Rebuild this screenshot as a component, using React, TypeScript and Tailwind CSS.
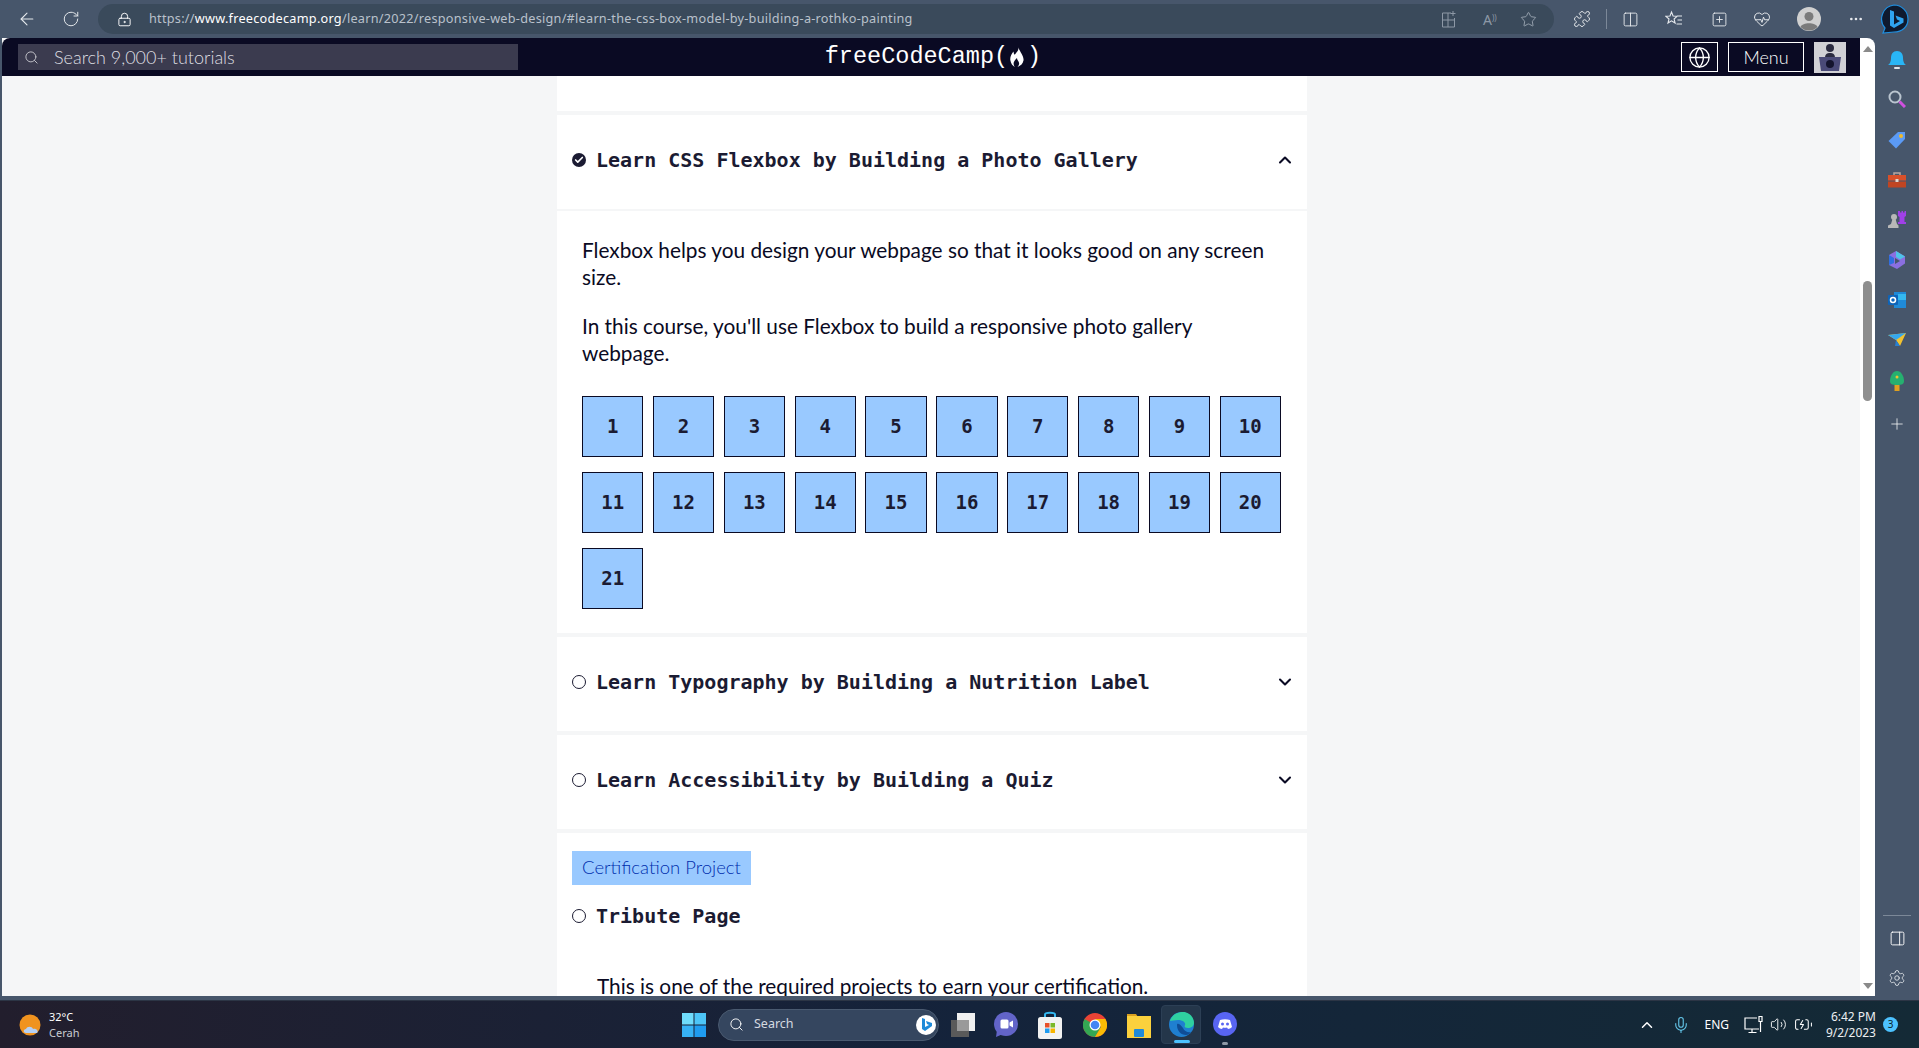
import {
  ArrowLeft,
  RotateCw,
  LockKeyhole,
  Search,
  Globe,
  Check,
  ChevronUp,
  ChevronDown,
  Star,
  Puzzle,
  Columns2,
  SquarePlus,
  HeartPulse,
  Ellipsis,
  Plus,
  PanelRight,
  Settings,
  Mic,
  Volume2,
  BatteryCharging,
} from "lucide-react";

// ─── Browser chrome ───────────────────────────────────────────────────────────
function BingLogo({ size = 30 }: { size?: number }) {
  return (
    <svg width={size} height={size} viewBox="0 0 30 30">
      <path d="M15 1a14 14 0 0 1 14 14c0 8-6 13-14 13l-11 1 2-5A14 14 0 0 1 15 1z" fill="#0f1a2e" stroke="#1f8fe0" strokeWidth="1.2" />
      <path d="M11 6l4 1.500v13l6-3.500-3-1.500-1.500-4 8 3v4l-9.500 5.500-4-2.500z" fill="#2fa4f0" />
    </svg>
  );
}

function AddressBar() {
  return (
    <div className="flex h-[30px] w-[1456px] items-center rounded-full bg-[#3a4a5b] pl-[19px] text-[#c5ccd5]">
      <LockKeyhole size={15} strokeWidth={1.5} className="text-white" />
      <span className="ml-[17px] w-[1292px] font-['Noto_Sans',sans-serif] text-[12.7px] tracking-[0.02em] text-[#b9c1cb]">
        https://<span className="text-white">www.freecodecamp.org</span>/learn/2022/responsive-web-design/#learn-the-css-box-model-by-building-a-rothko-painting
      </span>
      <svg width="16" height="17" viewBox="0 0 16 17" fill="none" stroke="#8d98a6" strokeWidth="1">
        <path d="M10 2H1.500v14h12V7M1.500 9h12M7 2v14M12 0v5M9.500 2.500h5" />
      </svg>
      <span className="ml-[26px] font-['Noto_Sans',sans-serif] text-[14px] text-[#8d98a6]">A<sup className="text-[8px]">))</sup></span>
      <Star size={17} strokeWidth={1.2} className="ml-[23px] text-[#a3adb9]" />
    </div>
  );
}

function TopBar() {
  return (
    <div className="flex h-[38px] shrink-0 items-center bg-[#47566b] text-[#e6e9ed]">
      <div className="flex w-[98px] shrink-0 items-center pl-[17px]">
        <ArrowLeft size={20} strokeWidth={1.3} />
        <RotateCw size={18} strokeWidth={1.3} className="ml-[25px]" />
      </div>
      <AddressBar />
      <div className="ml-[19px] flex items-center">
        <Puzzle size={18} strokeWidth={1.3} />
        <div className="ml-[15px] h-[20px] w-px bg-[#7c8898]" />
        <Columns2 size={17} strokeWidth={1.3} className="ml-[15px]" />
        <svg width="18" height="18" viewBox="0 0 18 18" fill="none" stroke="currentColor" strokeWidth="1.1" className="ml-[26px]">
          <path d="M6.500 2l1.600 4 4 .3-3 2.700 1 4-3.600-2.200L3 13l1-4-3-2.700 4-.3zM12 6h5M12.500 10H17M11.500 14H17" />
        </svg>
        <SquarePlus size={17} strokeWidth={1.3} className="ml-[28px]" />
        <HeartPulse size={18} strokeWidth={1.3} className="ml-[25px]" />
        <svg width="24" height="24" viewBox="0 0 24 24" className="ml-[26px]">
          <circle cx="12" cy="12" r="12" fill="#d0d0d0" />
          <circle cx="12" cy="9.500" r="4.500" fill="#7b7b7b" />
          <path d="M3.500 20c2-5 15-5 17 0a12 12 0 0 1-17 0z" fill="#7b7b7b" />
        </svg>
        <Ellipsis size={16} strokeWidth={2} className="ml-[27px]" />
        <div className="ml-[15px]">
          <BingLogo />
        </div>
      </div>
    </div>
  );
}

// ─── freeCodeCamp nav ─────────────────────────────────────────────────────────
function Flame() {
  return (
    <svg width="17" height="22" viewBox="0 0 15 20" className="mx-[1px]">
      <path d="M8 1c1 3-1 4-3 7-1-1-1-2-1-3-2 2-3.500 5-3 8 .5 3 2 5 4 6-2-3-1-5 2-8 0 2 2 3 2 5 0 1-.5 2-1.500 3 3-1 5-3 5.500-6 .3-4-3-7-5-12z" fill="#fff" />
    </svg>
  );
}

function Avatar() {
  return (
    <div className="ml-[10px] flex h-[31px] w-[32px] items-center justify-center bg-[#d0d0d5]">
      <svg width="26" height="29" viewBox="0 0 26 29">
        <circle cx="13" cy="5" r="4" fill="#2a2a40" />
        <path d="M8 15c0-4 2-5 5-5s5 1 5 5z" fill="#2a2a40" />
        <path d="M2 14h22l-2 14H4z" fill="#4a4a78" />
        <circle cx="13" cy="21" r="4" fill="#14142e" />
      </svg>
    </div>
  );
}

function Nav() {
  return (
    <div className="grid h-[38px] shrink-0 grid-cols-[1fr_auto_1fr] items-center rounded-tl-lg bg-[#0a0a23] text-white">
      <div className="pl-4">
        <div className="flex h-[26px] w-[500px] items-center bg-[#3b3b4f] pl-[6px] font-['Lato',sans-serif] text-[18px] font-light text-[#dfdfe2]">
          <Search size={15} strokeWidth={1.5} className="text-[#c5c5cc]" />
          <span className="ml-[15px]">Search 9,000+ tutorials</span>
        </div>
      </div>
      <div className="flex items-center pl-[4px] font-['Liberation_Mono',monospace] text-[23.5px]">
        <span>freeCodeCamp(</span>
        <Flame />
        <span>)</span>
      </div>
      <div className="flex items-center justify-end pr-[14px]">
        <div className="flex h-[30px] w-[37px] items-center justify-center border border-white">
          <Globe size={23} strokeWidth={1.4} />
        </div>
        <div className="ml-[10px] flex h-[30px] w-[76px] items-center justify-center border border-white font-['Lato',sans-serif] text-[18px] font-light">
          Menu
        </div>
        <Avatar />
      </div>
    </div>
  );
}

// ─── Curriculum blocks ────────────────────────────────────────────────────────
function StatusIcon({ done }: { done?: boolean }) {
  if (done) {
    return (
      <span className="flex h-[14px] w-[14px] shrink-0 items-center justify-center rounded-full bg-[#1b1b32]">
        <Check size={10} strokeWidth={4} className="text-white" />
      </span>
    );
  }
  return <span className="h-[14px] w-[14px] shrink-0 rounded-full border border-[#1b1b32]" />;
}

function BlockTitle({ done, title }: { done?: boolean; title: string }) {
  return (
    <div className="flex items-center">
      <StatusIcon done={done} />
      <span className="ml-[10px] font-['DejaVu_Sans_Mono',monospace] text-[20px] leading-[30px] font-bold whitespace-nowrap text-[#1b1b32]">
        {title}
      </span>
    </div>
  );
}

function BlockHeader({ done, open, title }: { done?: boolean; open?: boolean; title: string }) {
  return (
    <div className="flex h-[94px] items-center justify-between bg-white pr-[12px] pb-[4px] pl-[15px]">
      <BlockTitle done={done} title={title} />
      {open ? (
        <ChevronUp size={20} strokeWidth={2.5} className="text-[#0a0a23]" />
      ) : (
        <ChevronDown size={20} strokeWidth={2.5} className="text-[#0a0a23]" />
      )}
    </div>
  );
}

const steps = Array.from({ length: 21 }, (_, i) => i + 1);

function Curriculum() {
  return (
    <div className="ml-[555px] flex min-h-full w-[750px] flex-col gap-1">
      <div className="h-[35px] bg-white" />
      <div className="flex flex-col gap-[2px]">
        <BlockHeader done open title="Learn CSS Flexbox by Building a Photo Gallery" />
        <div className="bg-white pt-[25px] pr-[26px] pb-[24px] pl-[25px] font-['Lato',sans-serif] text-[20.8px] leading-[27px] text-[#0a0a23]">
          <p className="mb-[22px] max-w-[690px]">Flexbox helps you design your webpage so that it looks good on any screen size.</p>
          <p className="mb-[30px] max-w-[690px]">In this course, you'll use Flexbox to build a responsive photo gallery webpage.</p>
          <div className="grid grid-cols-10 gap-x-[9.500px] gap-y-[15px]">
            {steps.map((n) => (
              <div
                key={n}
                className="flex h-[61px] items-center justify-center border border-[#0a0a23] bg-[#99c9ff] font-['DejaVu_Sans_Mono',monospace] text-[19px] font-bold text-[#1b1b32]"
              >
                {n}
              </div>
            ))}
          </div>
        </div>
      </div>
      <BlockHeader title="Learn Typography by Building a Nutrition Label" />
      <BlockHeader title="Learn Accessibility by Building a Quiz" />
      <div className="flex-1 bg-white px-[15px] pt-[18px]">
        <div className="flex h-[34px] w-[179px] items-center justify-center bg-[#99c9ff] font-['Lato',sans-serif] text-[18.5px] font-light text-[#002ead]">
          Certification Project
        </div>
        <div className="mt-[16px]">
          <BlockTitle title="Tribute Page" />
        </div>
        <p className="mt-[41px] ml-[25px] font-['Lato',sans-serif] text-[20.8px] leading-[27px] whitespace-nowrap text-[#0a0a23]">
          This is one of the required projects to earn your certification.
        </p>
      </div>
    </div>
  );
}

function PageScrollbar() {
  return (
    <div className="flex w-[15px] shrink-0 flex-col items-center rounded-tr-lg bg-white">
      <div className="mt-[8px] h-0 w-0 border-x-[5px] border-b-[6px] border-x-transparent border-b-[#8a8a8a]" />
      <div className="mt-[229px] h-[120px] w-[9px] rounded-full bg-[#8f8f8f]" />
      <div className="flex-1" />
      <div className="mb-[7px] h-0 w-0 border-x-[5px] border-t-[6px] border-x-transparent border-t-[#8a8a8a]" />
    </div>
  );
}

// ─── Edge sidebar ─────────────────────────────────────────────────────────────
function Sidebar() {
  return (
    <div className="flex w-[44px] shrink-0 flex-col items-center bg-[#47566b] pt-[13px]">
      <svg width="18" height="20" viewBox="0 0 18 20">
        <path d="M9 0c4 0 6 3 6 7 0 3 1 6 3 7H0c2-1 3-4 3-7 0-4 2-7 6-7z" fill="#29b6f6" />
        <rect x="6" y="16" width="6" height="2" rx="1" fill="#dfe6ec" />
      </svg>
      <svg width="18" height="18" viewBox="0 0 18 18" className="mt-[19px]">
        <circle cx="7" cy="7" r="5.500" fill="none" stroke="#b9c4cf" strokeWidth="2" />
        <path d="M11.500 11.500L17 17" stroke="#d050e0" strokeWidth="3" />
      </svg>
      <svg width="18" height="18" viewBox="0 0 18 18" className="mt-[23px]">
        <path d="M10 1h7v7l-9 9.500L.5 10z" fill="#5b9af5" />
        <circle cx="13" cy="5" r="2" fill="#f0b92a" />
      </svg>
      <svg width="18" height="16" viewBox="0 0 18 16" className="mt-[23px]">
        <path d="M6 3V1h6v2" fill="none" stroke="#b9a6a0" strokeWidth="1.500" />
        <rect y="3" width="18" height="5.500" fill="#d8502a" />
        <rect y="9.500" width="18" height="6" fill="#c04522" />
        <rect x="7.500" y="7" width="3" height="3" fill="#e0d8d0" />
      </svg>
      <svg width="18" height="18" viewBox="0 0 18 18" className="mt-[22px]">
        <path d="M10 1h2v1.500h1.500V1h1.500v1.500h1.500V1H18v5l-1.500 1v5H18v2h-8v-2h1.500V7L10 6z" fill="#a040e8" />
        <circle cx="6" cy="7" r="3" fill="#b8b8b8" />
        <path d="M4.500 9h3l1.500 5 1.500 1.500V18H0v-2.500L3 14z" fill="#b8b8b8" />
      </svg>
      <svg width="18" height="18" viewBox="0 0 18 18" className="mt-[23px]">
        <path d="M8 0l9 5.500v7L9 18 1 14V4z" fill="#8a6fe0" />
        <path d="M8 0l9 5.500-5 3L8 6z" fill="#4fc3e8" />
        <path d="M1 4l5 3v5l-5 2z" fill="#2f6fe0" />
        <path d="M7 7l5 3-5 3z" fill="#47566b" />
      </svg>
      <svg width="18" height="16" viewBox="0 0 18 16" className="mt-[23px]">
        <rect x="6" width="12" height="16" fill="#1f8ad8" />
        <rect x="10" y="2" width="8" height="6" fill="#35b8f0" />
        <rect y="3" width="10" height="10" rx="1" fill="#0f64b8" />
        <circle cx="5" cy="8" r="2.500" fill="none" stroke="#fff" strokeWidth="1.500" />
      </svg>
      <svg width="18" height="13" viewBox="0 0 18 13" className="mt-[25px]">
        <path d="M0 2l18-2-6 13-4-6z" fill="#f2c230" />
        <path d="M0 2l8 5 10-7z" fill="#35a8ee" />
        <path d="M8 7l-1 6 5 0z" fill="#2a7fd0" />
      </svg>
      <svg width="14" height="20" viewBox="0 0 14 20" className="mt-[25px]">
        <path d="M7 0c4 0 7 5 7 10 0 3-2 4-7 4s-7-1-7-4C0 5 3 0 7 0z" fill="#26b070" />
        <rect x="4.500" y="14" width="5" height="6" fill="#e0a020" />
        <circle cx="7" cy="6" r="1.500" fill="#f2c230" />
      </svg>
      <Plus size={18} strokeWidth={1} className="mt-[24px] text-white" />
      <div className="flex-1" />
      <div className="h-px w-[28px] bg-[#7c8898]" />
      <PanelRight size={17} strokeWidth={1.3} className="mt-[14px] text-white" />
      <Settings size={18} strokeWidth={1.2} className="mt-[22px] mb-[9px] text-[#dfe3e8]" />
    </div>
  );
}

// ─── Windows taskbar ──────────────────────────────────────────────────────────
function WindowsLogo() {
  return (
    <svg width="24" height="24" viewBox="0 0 24 24">
      <rect width="11.500" height="11.500" fill="#6fdcfb" />
      <rect x="12.500" width="11.500" height="11.500" fill="#4dc5f7" />
      <rect y="12.500" width="11.500" height="11.500" fill="#36b2f5" />
      <rect x="12.500" y="12.500" width="11.500" height="11.500" fill="#1f9cf0" />
    </svg>
  );
}

function TaskbarApps() {
  return (
    <div className="flex items-center">
      <svg width="24" height="24" viewBox="0 0 24 24">
        <rect x="6" width="18" height="18" fill="#f0f0f0" />
        <rect y="7" width="18" height="17" fill="#5a5a5a" />
        <rect x="6" y="7" width="12" height="11" fill="#9a9a9a" />
      </svg>
      <svg width="24" height="26" viewBox="0 0 24 26" className="ml-[19px]">
        <circle cx="12" cy="12" r="12" fill="#6264c8" />
        <path d="M3 18l-1 7 7-3z" fill="#6264c8" />
        <rect x="6.500" y="7.500" width="8" height="9" rx="1.500" fill="#fff" />
        <path d="M15.500 10.500l3.500-2v7l-3.500-2z" fill="#fff" />
      </svg>
      <svg width="24" height="28" viewBox="0 0 24 28" className="ml-[20px]">
        <path d="M7 7V3.500C7 1 17 1 17 3.500V7" fill="none" stroke="#35b8f0" strokeWidth="2" />
        <rect y="6" width="24" height="22" rx="2.500" fill="#f2f2f2" />
        <rect x="7" y="12" width="4.500" height="4.500" fill="#e8512a" />
        <rect x="12.500" y="12" width="4.500" height="4.500" fill="#7ab92a" />
        <rect x="7" y="17.500" width="4.500" height="4.500" fill="#1f9cf0" />
        <rect x="12.500" y="17.500" width="4.500" height="4.500" fill="#f7b500" />
      </svg>
      <svg width="24" height="24" viewBox="0 0 24 24" className="ml-[21px]">
        <circle cx="12" cy="12" r="12" fill="#ea4335" />
        <path d="M12 12L1.600 6A12 12 0 0 0 12 24l6-10z" fill="#34a853" />
        <path d="M12 24a12 12 0 0 0 10.400-18H12l6 8z" fill="#fbbc05" />
        <circle cx="12" cy="12" r="5.500" fill="#fff" />
        <circle cx="12" cy="12" r="4.300" fill="#4285f4" />
      </svg>
      <svg width="24" height="26" viewBox="0 0 24 26" className="ml-[20px]">
        <path d="M0 2h9l2 3H0z" fill="#d9a020" />
        <rect y="4" width="24" height="22" fill="#fbd13d" />
        <rect x="7" y="17" width="10" height="8" rx="1" fill="#1f8ad8" />
      </svg>
      <div className="relative ml-[10px] flex h-[39px] w-[40px] items-center justify-center rounded-[4px] border border-[#2c3f55] bg-[#24364a]">
        <svg width="25" height="25" viewBox="0 0 25 25">
          <circle cx="12.500" cy="12.500" r="12.500" fill="#1f7fd0" />
          <path d="M1 9C3 2 10 0 14 0c6 0 11 5 11 11 0 3-3 5-6 5s-4-1-3-3c1-3-3-5-7-5-3 0-6 1-8 1z" fill="#2fd0a0" />
          <path d="M8 13c0 6 4 10 9 10 2 0 4-1 5-3-3 1-7-1-8-4-2-3-6-6-6-3z" fill="#0f4d96" />
        </svg>
        <div className="absolute bottom-0 left-[12px] h-[3px] w-[16px] rounded-full bg-[#4cc2ff]" />
      </div>
      <div className="relative ml-[12px] h-[25px] w-[24px]">
        <svg width="24" height="24" viewBox="0 0 24 24">
          <circle cx="12" cy="12" r="12" fill="#5865f2" />
          <path d="M7 8c3-1 7-1 10 0l2 7c-1 1-3 2-4 2l-1-1.500c-1 .3-3 .3-4 0L9 17c-1 0-3-1-4-2z" fill="#fff" />
          <circle cx="9.500" cy="12" r="1.500" fill="#5865f2" />
          <circle cx="14.500" cy="12" r="1.500" fill="#5865f2" />
        </svg>
        <div className="absolute top-[30px] left-[9px] h-[3px] w-[6px] rounded-full bg-[#8d98a6]" />
      </div>
    </div>
  );
}

function Tray() {
  return (
    <div className="flex items-center text-white">
      <ChevronUp size={18} strokeWidth={2} />
      <Mic size={18} strokeWidth={1.5} className="ml-[16px] text-[#63c5e8]" />
      <span className="ml-[14px] font-['Noto_Sans',sans-serif] text-[12px]">ENG</span>
      <svg width="20" height="20" viewBox="0 0 20 20" fill="none" stroke="currentColor" strokeWidth="1.2" className="ml-[15px]">
        <path d="M13 3H1v11h14M8 14v3M4.500 17.500h8M15 1.500h3v5h-3zM16.500 6.500V17" />
      </svg>
      <Volume2 size={17} strokeWidth={1.3} className="ml-[6px]" />
      <BatteryCharging size={19} strokeWidth={1.3} className="ml-[7px]" />
      <div className="ml-[9px] w-[54px] text-right font-['Noto_Sans',sans-serif] text-[12px] leading-[16px] whitespace-nowrap text-[#eceff2]">
        <div>6:42 PM</div>
        <div>9/2/2023</div>
      </div>
      <div className="mr-[21px] ml-[7px] flex h-[15px] w-[15px] items-center justify-center rounded-full bg-[#4cc2ff] font-['Noto_Sans',sans-serif] text-[10px] text-[#0b1f2e]">
        3
      </div>
    </div>
  );
}

function Taskbar() {
  return (
    <div className="flex h-[48px] shrink-0 items-center justify-between border-t border-[#2c3545] bg-gradient-to-r from-[#221e2d] via-[#14233b] to-[#142a36]">
      <div className="flex w-[682px] items-center pl-[19px]">
        <svg width="22" height="22" viewBox="0 0 22 22">
          <circle cx="11" cy="11" r="10.500" fill="#f0931f" />
          <path d="M7 19c-3 0-3-4 0-4 1-3 6-3 7 0 3-1 6 2 4 4z" fill="#b5d0f5" />
        </svg>
        <div className="ml-[8px] font-['Noto_Sans',sans-serif] text-[11px] leading-[16px]">
          <div className="text-white">32°C</div>
          <div className="text-[#c9ccd2]">Cerah</div>
        </div>
      </div>
      <div className="flex flex-1 items-center">
        <WindowsLogo />
        <div className="mr-[12px] ml-[12px] flex h-[32px] w-[221px] items-center rounded-full border border-[#4a5a70] bg-[#35465f] pl-[10px] font-['Noto_Sans',sans-serif] text-[12.5px] text-[#d5dae0]">
          <Search size={15} strokeWidth={1.5} className="text-white" />
          <span className="ml-[10px] flex-1">Search</span>
          <span className="mr-[2px] flex h-[20px] w-[20px] items-center justify-center rounded-full bg-white">
            <svg width="12" height="14" viewBox="0 0 12 14">
              <path d="M2 0l3 1v8l4-2-2-1-1-3 6 2v3l-7 5-3-2z" fill="#1f8ad8" />
            </svg>
          </span>
        </div>
        <TaskbarApps />
      </div>
      <Tray />
    </div>
  );
}

export default function App() {
  return (
    <div className="flex h-[1048px] w-[1919px] flex-col overflow-hidden bg-[#47566b]">
      <TopBar />
      <div className="flex min-h-0 flex-1 pb-[4px]">
        <div className="flex min-w-0 flex-1 pl-[2px]">
          <div className="flex min-w-0 flex-1 flex-col bg-[#f5f6f7]">
            <Nav />
            <div className="min-h-0 flex-1 overflow-hidden">
              <Curriculum />
            </div>
          </div>
          <PageScrollbar />
        </div>
        <Sidebar />
      </div>
      <Taskbar />
    </div>
  );
}
